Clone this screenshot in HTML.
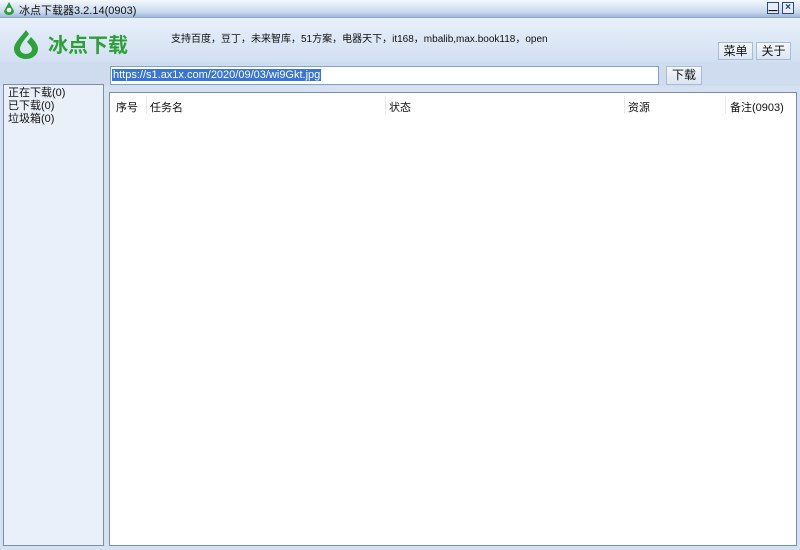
<!DOCTYPE html>
<html><head><meta charset="utf-8"><style>
*{margin:0;padding:0;box-sizing:border-box}
body{width:800px;height:550px;overflow:hidden;background:#d5e1f1;font-family:"Liberation Sans","Noto Sans CJK SC","WenQuanYi Zen Hei",sans-serif;font-size:11px;color:#111;position:relative}
.abs{position:absolute}
#title{left:0;top:0;width:800px;height:18px;background:linear-gradient(#f4f8fd,#c9d9ee 70%,#9fb8dc);border-bottom:1px solid #8fa9cf}
#head{left:0;top:18px;width:800px;height:44px;background:linear-gradient(#e8f0fa,#d3e0f2)}
#bar{left:0;top:62px;width:800px;height:24px;background:#cfdcef}
.btn{background:linear-gradient(#f5f8fc,#dbe5f2);border:1px solid #a9bcd6;font-size:12px;text-align:center;line-height:16px}
#left{left:3px;top:84px;width:101px;height:462px;background:#eaf0f9;border:1px solid #7b8ea8;padding:2px 4px;line-height:13px;font-size:11px}
#main{left:109px;top:92px;width:688px;height:454px;background:#fff;border:1px solid #7b8ea8}
.th{top:6px;font-size:11px}
.sep{top:3px;width:1px;height:18px;background:#e4e8ee}
</style></head><body>
<div id="title" class="abs">
<svg class="abs" style="left:2px;top:1px" width="14" height="14" viewBox="0 0 14 14"><path d="M7 1 L12 10 A5 4 0 0 1 2 10 Z" fill="#2aa036"/><circle cx="7" cy="9" r="2.3" fill="#fff"/></svg>
<span class="abs" style="left:19px;top:2px;font-size:11px">冰点下载器3.2.14(0903)</span>
<div class="abs" style="left:767px;top:2px;width:12px;height:12px;border:1px solid #2c4a80;background:#e8eef8;font-size:9px;line-height:9px;text-align:center">▁</div>
<div class="abs" style="left:782px;top:2px;width:12px;height:12px;border:1px solid #2c4a80;background:#e8eef8;font-size:10px;line-height:10px;text-align:center;font-weight:bold;color:#1a3c7a">×</div>
</div>
<div id="head" class="abs">
<svg class="abs" style="left:10px;top:10px" width="32" height="32" viewBox="0 0 32 32"><path d="M16 2 C10 10 4 15 4 21 A12 10 0 0 0 28 21 C28 17 25 13 21 9 L17 14 C20 17 22 19 22 21 A6 5 0 0 1 10 21 C10 17 14 12 19 6 Z" fill="#2ca23a"/></svg>
<span class="abs" style="left:48px;top:11px;font-size:20px;font-weight:bold;color:#2aa036">冰点下载</span>
<span class="abs" style="left:171px;top:12px;font-size:10px">支持百度，豆丁，未来智库，51方案，电器天下，it168，mbalib,max.book118，open</span>
<div class="btn abs" style="left:718px;top:24px;width:35px;height:18px">菜单</div>
<div class="btn abs" style="left:756px;top:24px;width:35px;height:18px">关于</div>
</div>
<div id="bar" class="abs">
<div class="abs" style="left:110px;top:4px;width:549px;height:19px;background:#fff;border:1px solid #7fa3c8;padding:1px">
<span style="background:#3875d7;color:#fff;font-size:11px;line-height:15px;padding:0 1px">https://s1.ax1x.com/2020/09/03/wi9Gkt.jpg</span></div>
<div class="btn abs" style="left:666px;top:4px;width:36px;height:19px;line-height:17px">下载</div>
</div>
<div id="left" class="abs">正在下载(0)<br>已下载(0)<br>垃圾箱(0)</div>
<div id="main" class="abs">
<span class="abs th" style="left:6px">序号</span>
<div class="abs sep" style="left:36px"></div>
<span class="abs th" style="left:40px">任务名</span>
<div class="abs sep" style="left:275px"></div>
<span class="abs th" style="left:279px">状态</span>
<div class="abs sep" style="left:514px"></div>
<span class="abs th" style="left:518px">资源</span>
<div class="abs sep" style="left:615px"></div>
<span class="abs th" style="left:620px">备注(0903)</span>
</div>
</body></html>
